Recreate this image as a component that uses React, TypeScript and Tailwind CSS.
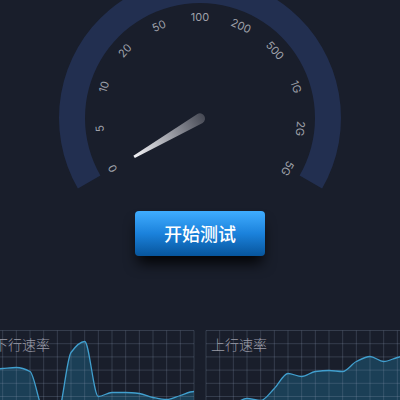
import React from 'react';

const LABELS = ['0', '5', '10', '20', '50', '100', '200', '500', '1G', '2G', '5G'];

const DOWNLOAD = [39, 38, 37, 41, 80, 84, 22, 11, 66, 62, 62, 63, 67, 69, 65, 61];
const UPLOAD = [88, 82, 74, 68, 70, 58, 43, 46, 41, 40, 41, 31, 26, 31, 27, 24];

const CHART_WIDTH = 205;
const CHART_HEIGHT = 132;
const COLUMNS = 15;
const ROWS = 10;

// Monotone cubic through evenly spaced points
const smoothPath = (values: number[]) => {
  const step = CHART_WIDTH / (values.length - 1);
  const slopes = values.map((v, i) => {
    if (i === 0 || i === values.length - 1) return 0;
    const before = (v - values[i - 1]) / step;
    const after = (values[i + 1] - v) / step;
    if (before * after <= 0) return 0;
    return (2 * before * after) / (before + after);
  });
  let d = `M0 ${values[0]}`;
  for (let i = 1; i < values.length; i++) {
    const x = i * step;
    d += ` C${x - (step * 2) / 3} ${values[i - 1] + (slopes[i - 1] * step) / 3} ${x - step / 3} ${values[i] - (slopes[i] * step) / 3} ${x} ${values[i]}`;
  }
  return d;
};

const Gauge: React.FC = () => (
  <svg viewBox="58 0 284 190" className="block h-[190px] w-[284px]" role="img" aria-label="测速仪表盘">
    <defs>
      <linearGradient id="needle" gradientUnits="userSpaceOnUse" x1="134" y1="157" x2="204" y2="116">
        <stop offset="0" stopColor="#f4f4f7" />
        <stop offset="0.5" stopColor="#a0a2aa" />
        <stop offset="1" stopColor="#464954" />
      </linearGradient>
    </defs>
    <path
      d="M77.9 188.5 A141 141 0 1 1 322.1 188.5 L299.6 175.5 A115 115 0 1 0 100.4 175.5 Z"
      fill="#222f50"
    />
    {LABELS.map((label, i) => (
      <text
        key={label}
        x="200"
        y="21"
        textAnchor="middle"
        transform={`rotate(${-120 + i * 24} 200 118)`}
        className="fill-[#9fa1aa] font-['Inter','Liberation_Sans',sans-serif] text-[11px]"
      >
        {label}
      </text>
    ))}
    <path d="M133.4 155.7 L197.4 114 A5.2 5.2 0 0 1 202.6 123 L134.8 158 Z" fill="url(#needle)" />
  </svg>
);

interface ChartProps {
  title: string;
  values: number[];
}

const SpeedChart: React.FC<ChartProps> = ({ title, values }) => {
  const line = smoothPath(values);

  return (
    <section className="relative">
      <svg
        viewBox={`0 0 ${CHART_WIDTH} ${CHART_HEIGHT}`}
        preserveAspectRatio="none"
        className="block h-[132px] w-full overflow-visible"
        aria-hidden="true"
      >
        <g transform="translate(0 0.5)">
          <path d={`${line} V${CHART_HEIGHT} H0 Z`} fill="#1b3f56" />
          <g stroke="#8c9bb4" strokeOpacity="0.25">
            {Array.from({ length: COLUMNS + 1 }, (_, i) => (
              <path key={`c${i}`} d={`M${(i * CHART_WIDTH) / COLUMNS} 0 V${CHART_HEIGHT}`} />
            ))}
            {Array.from({ length: ROWS + 1 }, (_, i) => (
              <path key={`r${i}`} d={`M0 ${(i * CHART_HEIGHT) / ROWS} H${CHART_WIDTH}`} />
            ))}
          </g>
          <path d={line} fill="none" stroke="#419fce" strokeWidth="1.3" />
        </g>
      </svg>
      <h2 className="absolute top-[5px] left-[5px] text-sm leading-5 font-light text-[#9a9ba6]">{title}</h2>
    </section>
  );
};

const App: React.FC = () => {
  return (
    <main className="flex h-screen flex-col items-center overflow-hidden bg-[#191e2b] font-['Liberation_Sans','Noto_Sans_CJK_SC',sans-serif]">
      <div className="shrink-0">
        <Gauge />
      </div>

      <button
        type="button"
        className="mt-[21px] h-[45px] w-[130px] shrink-0 cursor-pointer rounded bg-linear-to-b from-[#3fadff] via-[#1b82dc] to-[#07559c] pt-[2px] text-lg font-medium text-white shadow-[0_10px_14px_-3px_rgba(0,0,0,0.9)]"
      >
        开始测试
      </button>

      {/* The charts bleed past both page edges */}
      <div className="mt-[74px] flex w-full shrink-0 flex-col">
        <div className="-mx-[11px] grid grid-cols-2 gap-3">
          <SpeedChart title="下行速率" values={DOWNLOAD} />
          <SpeedChart title="上行速率" values={UPLOAD} />
        </div>
      </div>
    </main>
  );
};

export default App;
